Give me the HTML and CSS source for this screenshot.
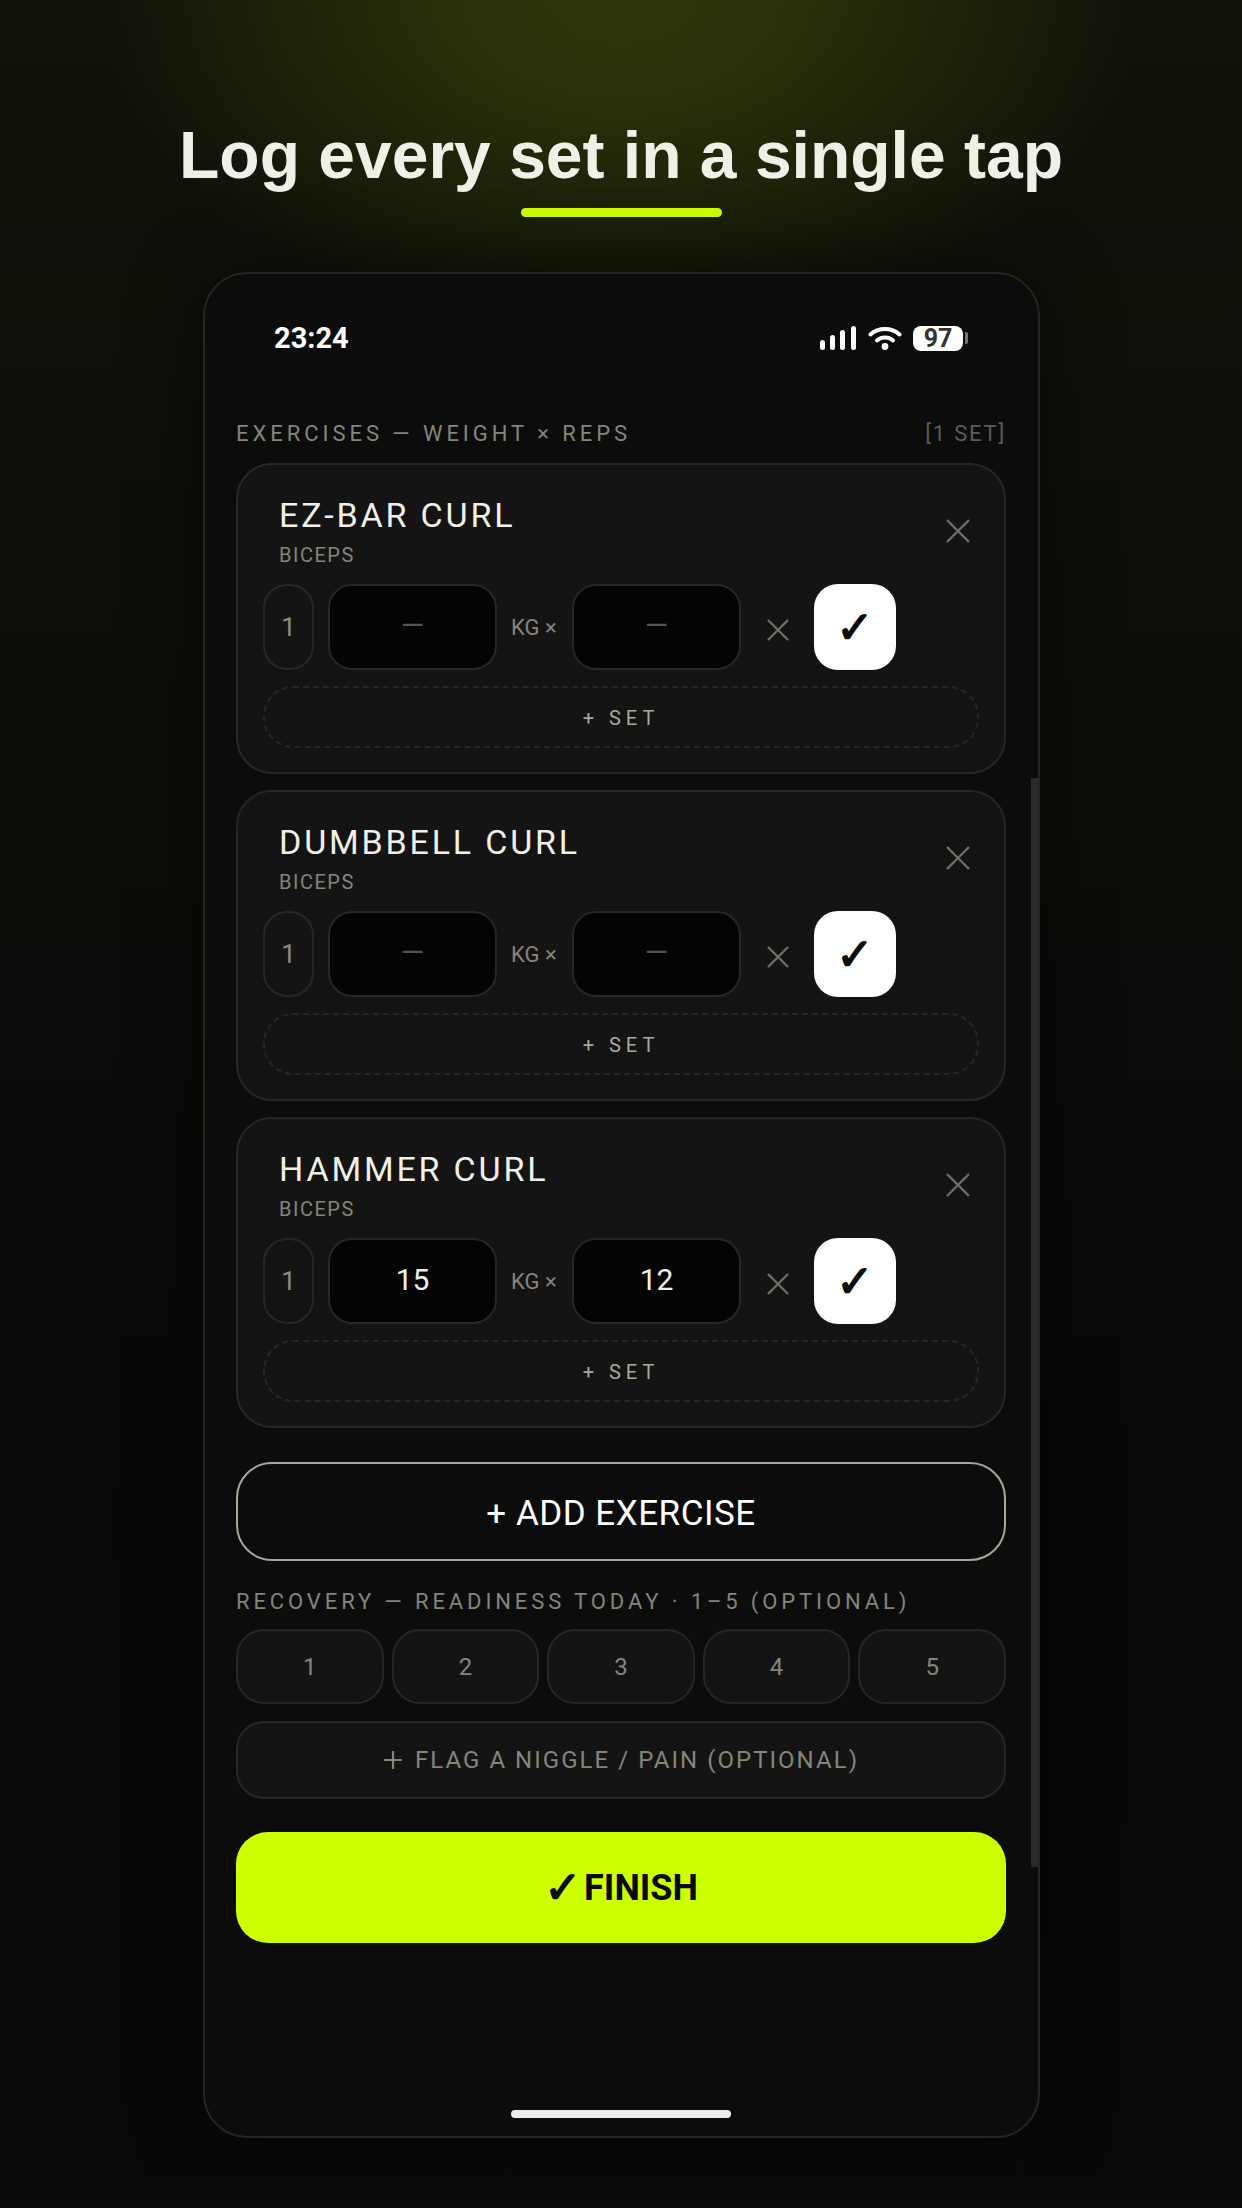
FILE: index.html
```html
<!DOCTYPE html>
<html lang="en">
<head>
  <meta charset="UTF-8">
  <meta name="viewport" content="width=device-width, initial-scale=1.0">
  <title>Log every set in a single tap</title>
  <link rel="stylesheet" href="styles.css">
</head>
<body>
  <header class="hero">
    <h1>Log every set in a single tap</h1>
    <div class="hero-line"></div>
  </header>

  <main class="phone">
    <div class="statusbar">
      <span class="time">23:24</span>
      <div class="status-icons">
        <svg class="signal" width="36" height="24" viewBox="0 0 36 24">
          <rect x="0" y="14" width="5" height="10" rx="2.5"/>
          <rect x="10" y="9" width="5" height="15" rx="2.5"/>
          <rect x="20" y="4" width="5" height="20" rx="2.5"/>
          <rect x="31" y="0" width="5" height="24" rx="2.5"/>
        </svg>
        <svg class="wifi" width="34" height="24" viewBox="0 0 34 24">
          <path d="M2.5 8.5 C10.5 1.2 23.5 1.2 31.5 8.5"/>
          <path d="M9 14.5 C13.5 10.6 20.5 10.6 25 14.5"/>
          <circle cx="17" cy="20.5" r="3.4"/>
        </svg>
        <div class="battery"><span class="battery-level">97</span><span class="battery-tip"></span></div>
      </div>
    </div>

    <div class="section-label">
      <span>EXERCISES — WEIGHT × REPS</span>
      <span class="set-count">[1 SET]</span>
    </div>

    <section class="card">
      <div class="card-head">
        <div>
          <div class="ex-name">EZ-BAR CURL</div>
          <div class="ex-muscle">BICEPS</div>
        </div>
        <svg class="x-icon close" width="24" height="24" viewBox="0 0 24 24"><path d="M1 1 L23 23 M23 1 L1 23"/></svg>
      </div>
      <div class="set-row">
        <div class="set-no">1</div>
        <div class="field empty">—</div>
        <div class="unit">KG ×</div>
        <div class="field empty">—</div>
        <div class="remove"><svg class="x-icon" width="22" height="22" viewBox="0 0 22 22"><path d="M1 1 L21 21 M21 1 L1 21"/></svg></div>
        <div class="check">✓</div>
      </div>
      <div class="add-set">+ SET</div>
    </section>

    <section class="card">
      <div class="card-head">
        <div>
          <div class="ex-name">DUMBBELL CURL</div>
          <div class="ex-muscle">BICEPS</div>
        </div>
        <svg class="x-icon close" width="24" height="24" viewBox="0 0 24 24"><path d="M1 1 L23 23 M23 1 L1 23"/></svg>
      </div>
      <div class="set-row">
        <div class="set-no">1</div>
        <div class="field empty">—</div>
        <div class="unit">KG ×</div>
        <div class="field empty">—</div>
        <div class="remove"><svg class="x-icon" width="22" height="22" viewBox="0 0 22 22"><path d="M1 1 L21 21 M21 1 L1 21"/></svg></div>
        <div class="check">✓</div>
      </div>
      <div class="add-set">+ SET</div>
    </section>

    <section class="card">
      <div class="card-head">
        <div>
          <div class="ex-name">HAMMER CURL</div>
          <div class="ex-muscle">BICEPS</div>
        </div>
        <svg class="x-icon close" width="24" height="24" viewBox="0 0 24 24"><path d="M1 1 L23 23 M23 1 L1 23"/></svg>
      </div>
      <div class="set-row">
        <div class="set-no">1</div>
        <div class="field">15</div>
        <div class="unit">KG ×</div>
        <div class="field">12</div>
        <div class="remove"><svg class="x-icon" width="22" height="22" viewBox="0 0 22 22"><path d="M1 1 L21 21 M21 1 L1 21"/></svg></div>
        <div class="check">✓</div>
      </div>
      <div class="add-set">+ SET</div>
    </section>

    <button class="add-exercise">+ ADD EXERCISE</button>

    <div class="section-label recovery-label">RECOVERY — READINESS TODAY · 1–5 (OPTIONAL)</div>
    <div class="rating">
      <div class="rate">1</div>
      <div class="rate">2</div>
      <div class="rate">3</div>
      <div class="rate">4</div>
      <div class="rate">5</div>
    </div>
    <div class="flag">
      <svg class="plus" width="20" height="20" viewBox="0 0 20 20"><path d="M10 1 V19 M1 10 H19"/></svg>
      <span>FLAG A NIGGLE / PAIN (OPTIONAL)</span>
    </div>

    <button class="finish"><span class="finish-check">✓</span> <span>FINISH</span></button>

    <div class="scrollbar"></div>
    <div class="home-bar"></div>
  </main>
</body>
</html>
```

FILE: styles.css
```css
:root {
  --lime: #ccff00;
  --text: #f0f0e6;
  --muted: #85857a;
  --card: #141414;
  --line: #272727;
}

* {
  box-sizing: border-box;
}

html, body {
  margin: 0;
  padding: 0;
}

body {
  width: 1242px;
  height: 2208px;
  overflow: hidden;
  display: flex;
  flex-direction: column;
  align-items: center;
  font-family: Roboto, "Liberation Sans", sans-serif;
  color: var(--text);
  background:
    radial-gradient(ellipse 520px 340px at 50% 0, rgba(204, 255, 0, 0.15) 0, rgba(204, 255, 0, 0.13) 30%, rgba(204, 255, 0, 0) 100%),
    linear-gradient(180deg, #11130a 0, #0d0e08 500px, #080808 1500px, #090909 100%);
}

.hero {
  display: flex;
  flex-direction: column;
  align-items: center;
  padding-top: 118px;
}

h1 {
  margin: 0;
  font-family: "Liberation Sans", Arial, sans-serif;
  font-size: 66px;
  line-height: 74px;
  font-weight: 700;
  color: var(--text);
}

.hero-line {
  width: 201px;
  height: 9px;
  margin-top: 16px;
  margin-left: 1px;
  border-radius: 5px;
  background: var(--lime);
}

.phone {
  position: relative;
  width: 837px;
  height: 1866px;
  margin-top: 55px;
  margin-left: 1px;
  padding: 0 32px 0 31px;
  background: #0c0c0c;
  border: 2px solid #26261f;
  border-radius: 44px;
  box-shadow: 0 0 70px rgba(0, 0, 0, 0.55);
}

.statusbar {
  display: flex;
  justify-content: space-between;
  align-items: center;
  height: 28px;
  margin: 50px 38px 0;
}

.time {
  font-size: 29px;
  font-weight: 700;
  color: #fff;
}

.status-icons {
  display: flex;
  align-items: center;
  gap: 11px;
}

.signal {
  margin-right: 1px;
  fill: #fff;
}

.wifi path {
  fill: none;
  stroke: #fff;
  stroke-width: 4;
  stroke-linecap: round;
}

.wifi circle {
  fill: #fff;
}

.battery {
  display: flex;
  align-items: center;
  gap: 2px;
}

.battery-level {
  width: 50px;
  height: 25px;
  border-radius: 8px;
  background: #fff;
  color: #333;
  font-size: 25px;
  font-weight: 700;
  line-height: 25px;
  text-align: center;
}

.battery-tip {
  width: 3px;
  height: 12px;
  border-radius: 0 2px 2px 0;
  background: #777;
}

.section-label {
  display: flex;
  justify-content: space-between;
  margin-top: 69px;
  margin-bottom: 16px;
  font-size: 22px;
  line-height: 26px;
  letter-spacing: 0.18em;
  color: var(--muted);
}

.set-count {
  color: #5c5c52;
  letter-spacing: 0.08em;
}

.card {
  height: 311px;
  margin-bottom: 16px;
  padding: 30px 25px 24px;
  background: var(--card);
  border: 2px solid var(--line);
  border-radius: 36px;
}

.card-head {
  display: flex;
  justify-content: space-between;
  align-items: center;
  padding: 0 9px 0 16px;
}

.ex-name {
  font-size: 34px;
  line-height: 40px;
  letter-spacing: 0.083em;
  color: var(--text);
}

.ex-muscle {
  margin-top: 8px;
  font-size: 20px;
  line-height: 24px;
  letter-spacing: 0.075em;
  color: var(--muted);
}

.x-icon path {
  fill: none;
  stroke: #6e6e62;
  stroke-width: 2.4;
}

.set-row {
  display: flex;
  align-items: center;
  gap: 14px;
  margin-top: 17px;
}

.set-no {
  width: 51px;
  height: 86px;
  display: flex;
  align-items: center;
  justify-content: center;
  border: 2px solid var(--line);
  border-radius: 24px;
  font-size: 26px;
  color: #8c8c80;
}

.field {
  width: 169px;
  height: 86px;
  padding-bottom: 4px;
  display: flex;
  align-items: center;
  justify-content: center;
  background: #040404;
  border: 2px solid var(--line);
  border-radius: 24px;
  font-size: 30px;
  color: var(--text);
}

.field.empty {
  padding-bottom: 6px;
  color: #55554c;
}

.unit {
  width: 47px;
  font-size: 22px;
  white-space: nowrap;
  color: var(--muted);
}

.remove {
  width: 45px;
  padding-top: 5px;
  display: flex;
  justify-content: center;
}

.check {
  width: 82px;
  height: 86px;
  display: flex;
  align-items: center;
  justify-content: center;
  background: #fff;
  border-radius: 24px;
  font-family: "DejaVu Serif", serif;
  font-size: 45px;
  font-weight: 700;
  color: #0a0a0a;
}

.add-set {
  height: 62px;
  margin-top: 16px;
  padding-top: 2px;
  display: flex;
  align-items: center;
  justify-content: center;
  border: 2px dashed var(--line);
  border-radius: 30px;
  font-size: 20px;
  letter-spacing: 0.25em;
  color: #aaa99a;
}

.add-exercise {
  display: block;
  width: 770px;
  height: 99px;
  margin-top: 34px;
  padding: 3px 0 0;
  background: transparent;
  border: 2px solid #a8a898;
  border-radius: 36px;
  font-family: inherit;
  font-size: 35px;
  letter-spacing: 0.5px;
  color: #fff;
}

.recovery-label {
  margin-top: 28px;
  margin-bottom: 14px;
  letter-spacing: 0.177em;
}

.rating {
  display: grid;
  grid-template-columns: repeat(5, 1fr);
  gap: 8px;
}

.rate {
  height: 75px;
  display: flex;
  align-items: center;
  justify-content: center;
  background: var(--card);
  border: 2px solid var(--line);
  border-radius: 28px;
  font-size: 24px;
  color: var(--muted);
}

.flag {
  height: 78px;
  margin-top: 17px;
  display: flex;
  align-items: center;
  justify-content: center;
  gap: 12px;
  background: var(--card);
  border: 2px solid var(--line);
  border-radius: 28px;
  font-size: 24px;
  letter-spacing: 0.085em;
  color: var(--muted);
}

.plus path {
  fill: none;
  stroke: var(--muted);
  stroke-width: 2.2;
}

.finish {
  width: 770px;
  height: 111px;
  margin-top: 33px;
  padding: 0;
  display: flex;
  align-items: center;
  justify-content: center;
  gap: 2px;
  background: var(--lime);
  border: none;
  border-radius: 32px;
  font-family: inherit;
  font-size: 36px;
  font-weight: 700;
  color: #0a0a0a;
}

.finish-check {
  font-family: "DejaVu Serif", serif;
  font-size: 45px;
  line-height: 1;
}

.scrollbar {
  position: absolute;
  top: 504px;
  right: 0;
  width: 7px;
  height: 1089px;
  background: #2a2a2a;
}

.home-bar {
  position: absolute;
  bottom: 18px;
  left: 50%;
  width: 220px;
  height: 8px;
  margin-left: -111px;
  border-radius: 4px;
  background: #eeeeee;
}
```
